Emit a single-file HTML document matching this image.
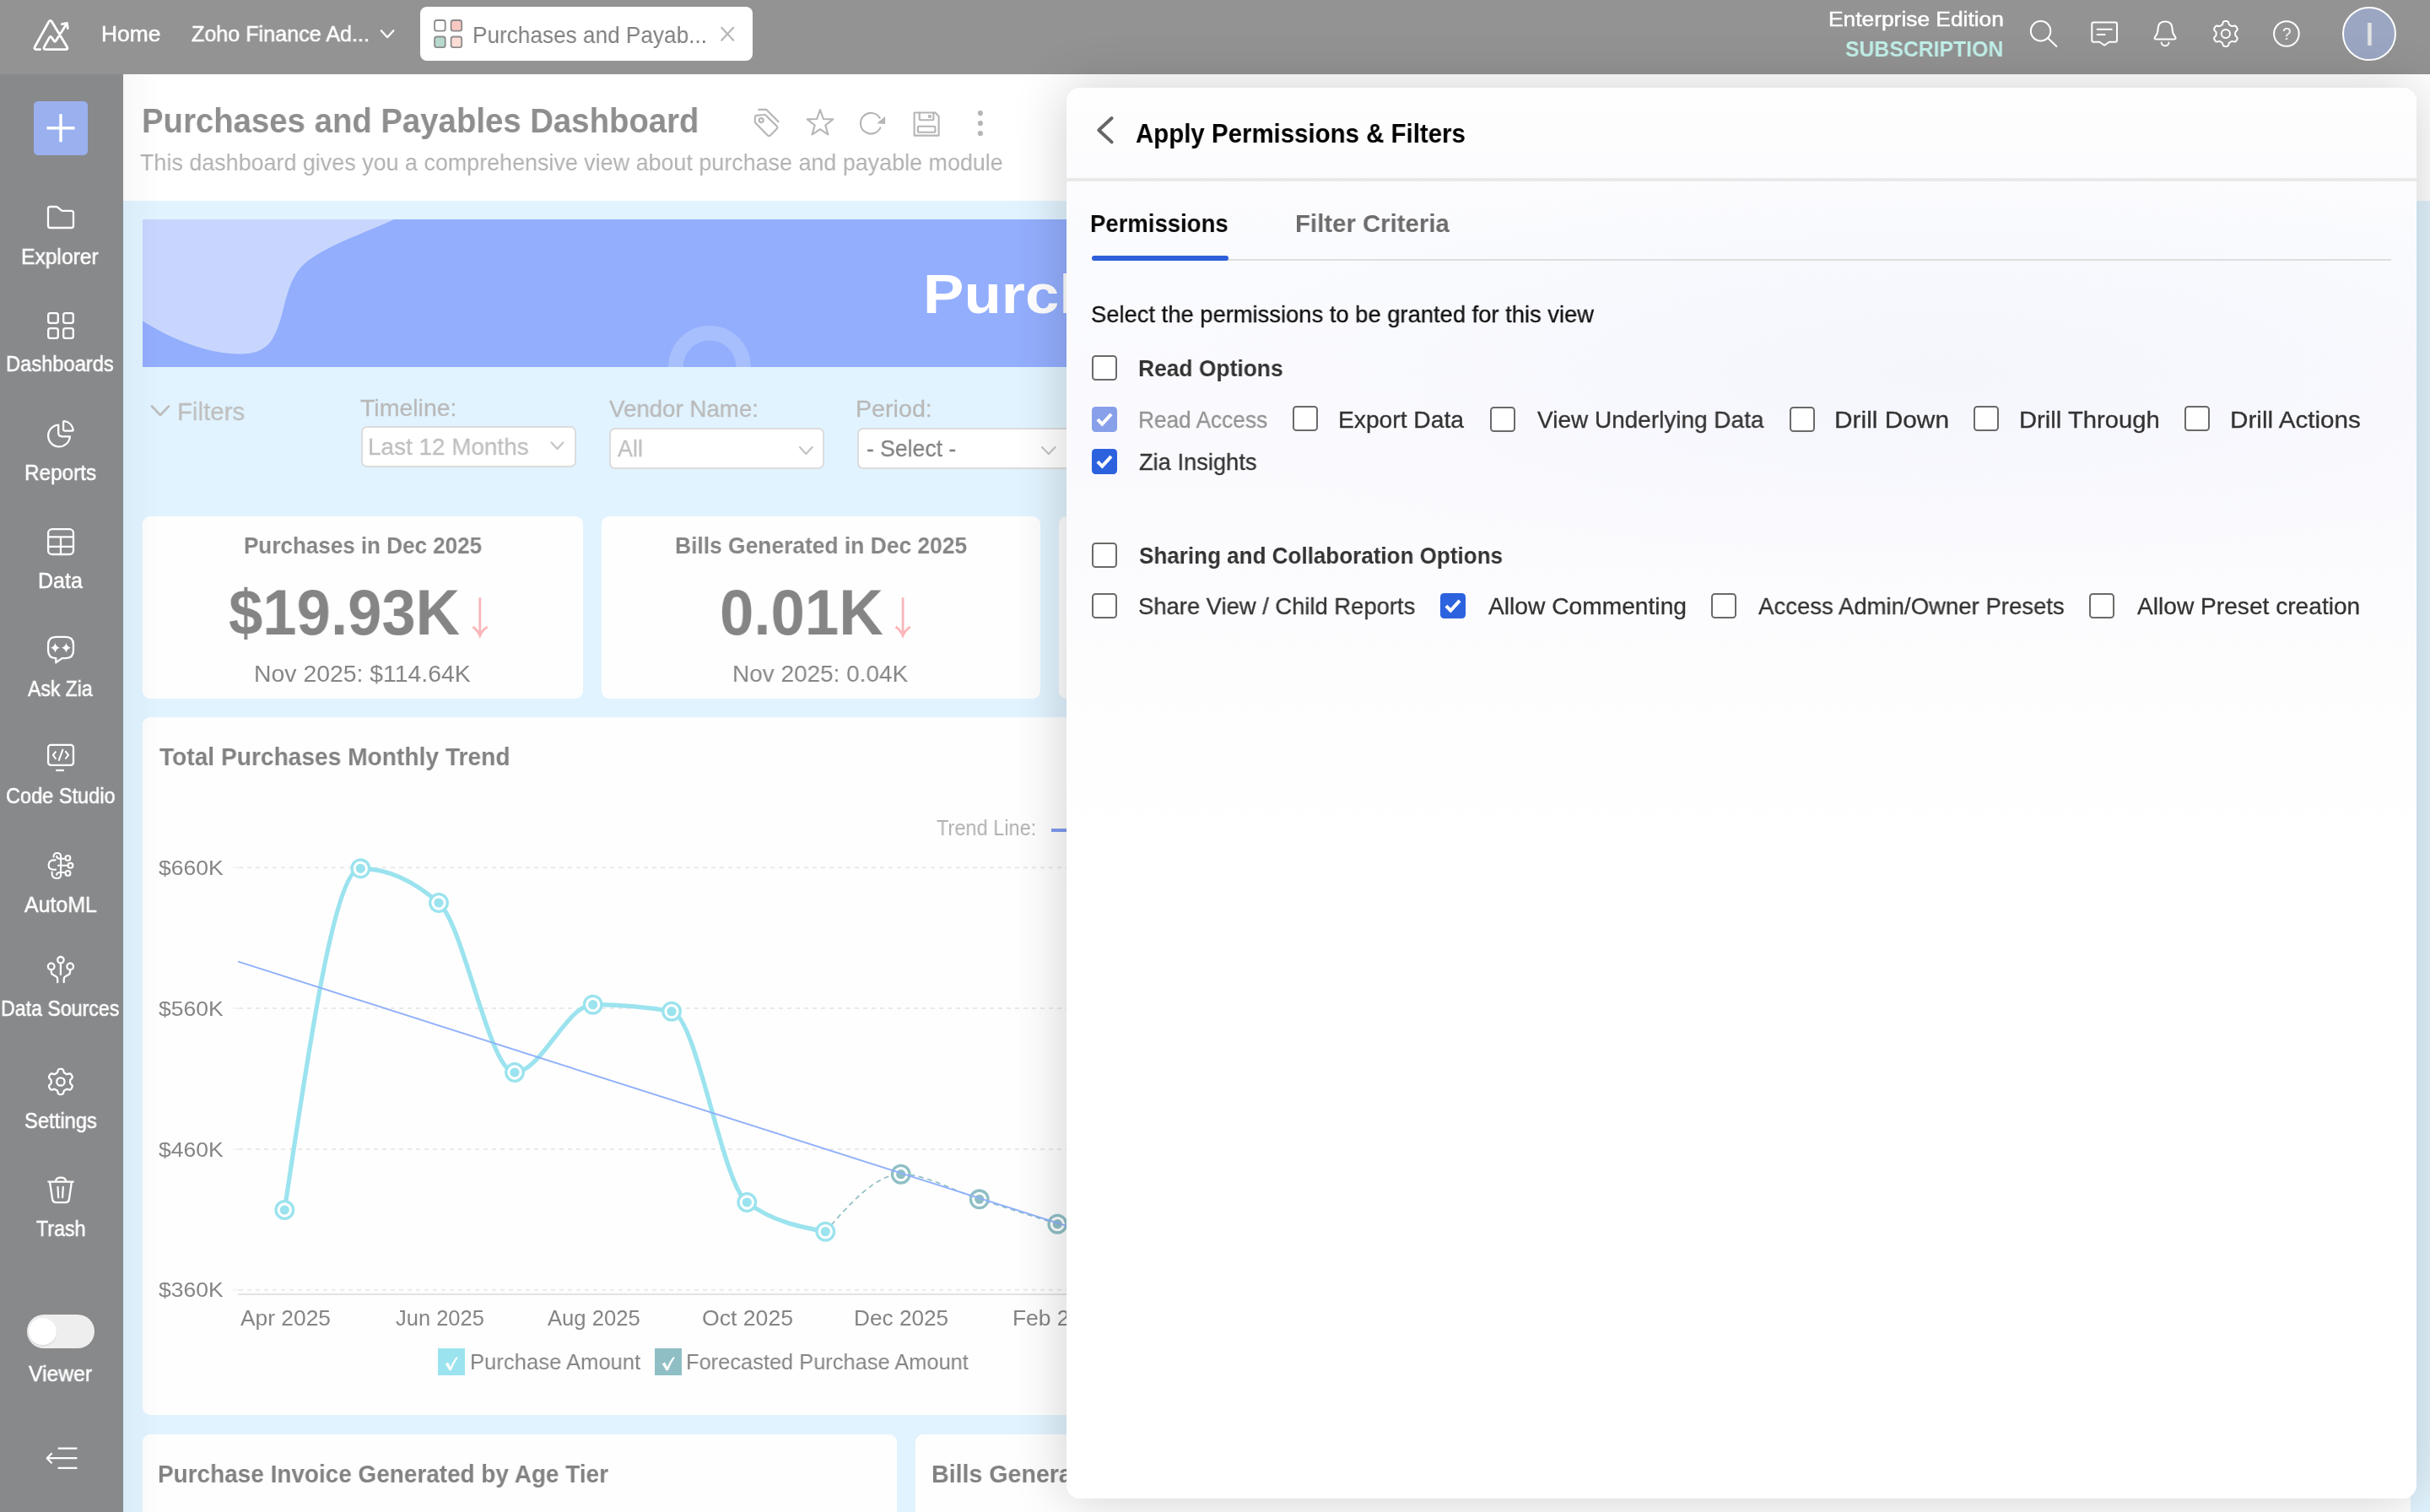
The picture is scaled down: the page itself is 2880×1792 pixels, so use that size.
<!DOCTYPE html>
<html lang="en"><head><meta charset="utf-8"><title>Purchases and Payables Dashboard</title>
<style>
html,body{margin:0;padding:0}
body{width:2880px;height:1792px;overflow:hidden;position:relative;background:#e1f3fe;
 font-family:"Liberation Sans",sans-serif;}
.r{position:absolute;box-sizing:border-box;display:block}
.t{position:absolute;white-space:nowrap;line-height:1;transform-origin:0 0;display:block;will-change:transform}
.cb{position:absolute;box-sizing:border-box;width:30px;height:30px;border:2px solid #6a6a6a;border-radius:4.5px;background:#fff}
.cb.on{border:none;background:#2c62de}
.cb.dis{border:none;background:#88a0ea}
</style></head><body>

<div class="r" style="left:146px;top:88px;width:2734px;height:150px;background:#ffffff;border-radius:0px;"></div>
<span class="t" style="left:167.65px;top:122.95px;font-size:41.4px;font-weight:700;color:#8e8e8e;transform:scaleX(0.9261);">Purchases and Payables Dashboard</span>
<span class="t" style="left:166.10px;top:179.00px;font-size:28px;font-weight:400;color:#b1b1b1;transform:scaleX(0.9606);">This dashboard gives you a comprehensive view about purchase and payable module</span>
<svg class="r" style="left:880px;top:120px;" width="300" height="50" viewBox="880 120 300 50" fill="none" stroke-linecap="round" stroke-linejoin="round">
<g stroke="#b5b5b5" stroke-width="2.1">
<path d="M896.5 136.9 L905.3 136 Q906.8 135.8 907.9 136.9 L920.6 149.6 Q922.2 151.2 920.6 152.8 L913 160.4 Q911.5 161.9 909.9 160.4 L895.6 146.1 Q894.6 145.1 894.7 143.7 L895 138.4 Q895.1 137 896.5 136.9 Z"/>
<circle cx="902.2" cy="142.6" r="2.5"/>
<path d="M899.3 129.9 H907 Q908.4 129.9 909.4 130.9 L922.6 144.3"/>
<path d="M972.0 130.2 L975.9 141.0 L987.3 141.4 L978.3 148.5 L981.4 159.5 L972.0 153.2 L962.6 159.5 L965.7 148.5 L956.7 141.4 L968.1 141.0 Z"/>
<path d="M1042.6 139.6 A12.3 12.3 0 1 0 1043.4 151.4"/>
<path d="M1083.6 133.5 H1108.4 L1112.6 137.7 V160.6 H1083.6 Z"/>
<path d="M1089.7 133.5 V140.8 Q1089.7 142.3 1091.2 142.3 H1104.9 Q1106.4 142.3 1106.4 140.8 V133.5"/>
<rect x="1087.8" y="149.7" width="20.6" height="7" rx="1.5"/>
</g>
<path d="M1039.3 146.3 L1049.1 138 V147 Z" fill="#b5b5b5"/>
<rect x="1100.1" y="136.1" width="3.7" height="3.7" fill="#b5b5b5"/>
<circle cx="1161.9" cy="134.1" r="3.1" fill="#b5b5b5"/><circle cx="1161.9" cy="146" r="3.1" fill="#b5b5b5"/><circle cx="1161.9" cy="158" r="3.1" fill="#b5b5b5"/>
</svg>
<svg class="r" style="left:169px;top:259.7px;overflow:hidden" width="1120" height="175" viewBox="169 259.7 1120 175" fill="none" stroke-linecap="round" stroke-linejoin="round">
<rect x="169" y="259.7" width="1120" height="175" fill="#93aefd"/>
<path d="M169 259.7 H467 C440 273 395 287 366 308 C335 330 340 375 322 403 C310 420 292 420 270 418.5 C235 415 195 397 169 380 Z" fill="#c8d6fd"/>
<circle cx="841" cy="434.5" r="40" stroke="#a8bffd" stroke-width="17.5"/>
</svg>
<span class="t" style="left:1093.75px;top:315.98px;font-size:65px;font-weight:700;color:#ffffff;transform:scaleX(1.1165);">Purchases</span>
<svg class="r" style="left:170px;top:470px;" width="40" height="34" viewBox="170 470 40 34" fill="none" stroke-linecap="round" stroke-linejoin="round"><path d="M180 481.5 L190 492 L200 481.5" stroke="#bdbdbd" stroke-width="2.6"/></svg>
<span class="t" style="left:209.67px;top:472.91px;font-size:30px;font-weight:400;color:#bebebe;transform:scaleX(0.9802);-webkit-text-stroke:0.3px #bebebe">Filters</span>
<span class="t" style="left:427.06px;top:469.60px;font-size:28px;font-weight:400;color:#b9b9b9;transform:scaleX(1.0176);-webkit-text-stroke:0.3px #b9b9b9">Timeline:</span>
<span class="t" style="left:721.58px;top:471.30px;font-size:28px;font-weight:400;color:#b9b9b9;transform:scaleX(0.9882);-webkit-text-stroke:0.3px #b9b9b9">Vendor Name:</span>
<span class="t" style="left:1014.40px;top:470.80px;font-size:28px;font-weight:400;color:#b9b9b9;transform:scaleX(1.0238);-webkit-text-stroke:0.3px #b9b9b9">Period:</span>
<div class="r" style="left:427.5px;top:504.5px;width:255px;height:49px;background:#fff;border-radius:7px;border:2px solid #dcdcdc;"></div>
<div class="r" style="left:721.5px;top:506.5px;width:255px;height:49px;background:#fff;border-radius:7px;border:2px solid #dcdcdc;"></div>
<div class="r" style="left:1016px;top:506.5px;width:300px;height:49px;background:#fff;border-radius:7px;border:2px solid #dcdcdc;"></div>
<span class="t" style="left:436.06px;top:515.60px;font-size:28px;font-weight:400;color:#bfbfbf;transform:scaleX(0.9955);-webkit-text-stroke:0.3px #bfbfbf">Last 12 Months</span>
<span class="t" style="left:731.70px;top:517.80px;font-size:28px;font-weight:400;color:#bfbfbf;transform:scaleX(0.9573);-webkit-text-stroke:0.3px #bfbfbf">All</span>
<span class="t" style="left:1026.63px;top:517.80px;font-size:28px;font-weight:400;color:#838383;transform:scaleX(0.9476);-webkit-text-stroke:0.3px #838383">- Select -</span>
<svg class="r" style="left:640px;top:515px;" width="640" height="35" viewBox="640 515 640 35" fill="none" stroke-linecap="round" stroke-linejoin="round"><g stroke="#c4c4c4" stroke-width="2.2">
<path d="M653.5 524.5 L660.5 532 L667.5 524.5"/><path d="M948 530 L955.3 538 L962.6 530"/><path d="M1235 530 L1242.8 538 L1250.6 530"/></g></svg>
<div class="r" style="left:169px;top:612px;width:521.7px;height:215.7px;background:#fefefe;border-radius:9px;"></div>
<div class="r" style="left:713.3px;top:612px;width:519.4px;height:215.7px;background:#fefefe;border-radius:9px;"></div>
<div class="r" style="left:1255px;top:612px;width:400px;height:215.7px;background:#fefefe;border-radius:9px;"></div>
<span class="t" style="left:288.68px;top:632.04px;font-size:28.3px;font-weight:700;color:#868686;transform:scaleX(0.9196);">Purchases in Dec 2025</span>
<span class="t" style="left:271.25px;top:688.34px;font-size:76.5px;font-weight:700;color:#858585;transform:scaleX(0.9471);">$19.93K</span>
<span class="t" style="left:301.35px;top:784.16px;font-size:28.4px;font-weight:400;color:#868686;transform:scaleX(0.9983);">Nov 2025: $114.64K</span>
<span class="t" style="left:799.75px;top:632.04px;font-size:28.3px;font-weight:700;color:#868686;transform:scaleX(0.9323);">Bills Generated in Dec 2025</span>
<span class="t" style="left:853.35px;top:688.34px;font-size:76.5px;font-weight:700;color:#858585;transform:scaleX(0.9486);">0.01K</span>
<span class="t" style="left:868.39px;top:784.16px;font-size:28.4px;font-weight:400;color:#868686;transform:scaleX(0.9843);">Nov 2025: 0.04K</span>
<svg class="r" style="left:550px;top:700px;" width="540" height="64" viewBox="550 700 540 64" fill="none" stroke-linecap="round" stroke-linejoin="round"><g stroke="#fbb6ba" stroke-width="2.8" stroke-linecap="butt" stroke-linejoin="miter">
<path d="M568.8 708.2 V752 M560.4 743 Q566 746.5 568.8 753.4 Q571.6 746.5 577.6 743"/>
<path d="M1070.1 708.2 V752 M1061.5 743 Q1067.3 746.5 1070.1 753.4 Q1072.9 746.5 1078.9 743"/></g></svg>
<div class="r" style="left:169px;top:850px;width:2688px;height:827.3px;background:#fefefe;border-radius:9px;"></div>
<span class="t" style="left:189.06px;top:882.75px;font-size:29px;font-weight:700;color:#828282;transform:scaleX(0.9704);">Total Purchases Monthly Trend</span>
<span class="t" style="left:1109.53px;top:968.84px;font-size:25px;font-weight:400;color:#b2b2b2;transform:scaleX(0.9416);">Trend Line:</span>
<div class="r" style="left:1246px;top:981.7px;width:60px;height:4.3px;background:#7f9cf0;border-radius:0px;"></div>
<span class="t" style="left:188.02px;top:1016.98px;font-size:24px;font-weight:400;color:#858585;transform:scaleX(1.1034);">$660K</span>
<span class="t" style="left:188.02px;top:1183.78px;font-size:24px;font-weight:400;color:#858585;transform:scaleX(1.1034);">$560K</span>
<span class="t" style="left:188.02px;top:1350.68px;font-size:24px;font-weight:400;color:#858585;transform:scaleX(1.1034);">$460K</span>
<span class="t" style="left:188.02px;top:1517.48px;font-size:24px;font-weight:400;color:#858585;transform:scaleX(1.1034);">$360K</span>
<span class="t" style="left:285.00px;top:1550.14px;font-size:25px;font-weight:400;color:#858585;transform:scaleX(1.0547);">Apr 2025</span>
<span class="t" style="left:468.92px;top:1550.14px;font-size:25px;font-weight:400;color:#858585;transform:scaleX(1.0187);">Jun 2025</span>
<span class="t" style="left:649.00px;top:1550.14px;font-size:25px;font-weight:400;color:#858585;transform:scaleX(1.0255);">Aug 2025</span>
<span class="t" style="left:832.10px;top:1550.14px;font-size:25px;font-weight:400;color:#858585;transform:scaleX(1.0650);">Oct 2025</span>
<span class="t" style="left:1012.20px;top:1550.14px;font-size:25px;font-weight:400;color:#858585;transform:scaleX(1.0481);">Dec 2025</span>
<span class="t" style="left:1199.59px;top:1550.14px;font-size:25px;font-weight:400;color:#858585;transform:scaleX(1.0553);">Feb 2026</span>
<svg class="r" style="left:170px;top:1000px;" width="1330" height="560" viewBox="170 1000 1330 560" fill="none" stroke-linecap="round" stroke-linejoin="round"><path d="M283 1028.3 H1500" stroke="#eaeaea" stroke-width="2" stroke-dasharray="5 5" stroke-linecap="butt"/><path d="M275.5 1028.3 H283" stroke="#f4f4f4" stroke-width="2" stroke-linecap="butt"/><path d="M283 1195.1 H1500" stroke="#eaeaea" stroke-width="2" stroke-dasharray="5 5" stroke-linecap="butt"/><path d="M275.5 1195.1 H283" stroke="#f4f4f4" stroke-width="2" stroke-linecap="butt"/><path d="M283 1362.0 H1500" stroke="#eaeaea" stroke-width="2" stroke-dasharray="5 5" stroke-linecap="butt"/><path d="M275.5 1362.0 H283" stroke="#f4f4f4" stroke-width="2" stroke-linecap="butt"/><path d="M283 1528.8 H1500" stroke="#eaeaea" stroke-width="2" stroke-dasharray="5 5" stroke-linecap="butt"/><path d="M275.5 1528.8 H283" stroke="#f4f4f4" stroke-width="2" stroke-linecap="butt"/><path d="M283 1534 H1500" stroke="#e2e2e2" stroke-width="2"/><path d="M978.3 1459.7 C1008.1 1425.7 1037.9 1391.7 1067.7 1391.7 C1098.7 1391.7 1129.7 1411.4 1160.7 1421.3 C1191.6 1431.1 1222.4 1440.9 1253.3 1450.7 C1283.9 1460.4 1314.4 1470.2 1345.0 1480.0" stroke="#8fbfc5" stroke-width="1.7" stroke-dasharray="6 4.5" stroke-linecap="butt"/><path d="M337.3 1434.0 C367.3 1231.7 397.3 1029.3 427.3 1029.3 C458.2 1029.3 489.1 1042.9 520.0 1070.0 C550.0 1096.3 580.0 1271.0 610.0 1271.0 C640.9 1271.0 671.8 1190.7 702.7 1190.7 C733.8 1190.7 764.9 1193.4 796.0 1198.7 C825.8 1203.8 855.5 1402.8 885.3 1425.0 C916.3 1448.1 947.3 1453.9 978.3 1459.7" stroke="#9be3ee" stroke-width="5.2"/><circle cx="337.3" cy="1434" r="10.3" fill="#fff" stroke="#9be3ee" stroke-width="3.3"/><circle cx="337.3" cy="1434" r="5.6" fill="#9be3ee"/><circle cx="427.3" cy="1029.3" r="10.3" fill="#fff" stroke="#9be3ee" stroke-width="3.3"/><circle cx="427.3" cy="1029.3" r="5.6" fill="#9be3ee"/><circle cx="520" cy="1070" r="10.3" fill="#fff" stroke="#9be3ee" stroke-width="3.3"/><circle cx="520" cy="1070" r="5.6" fill="#9be3ee"/><circle cx="610" cy="1271" r="10.3" fill="#fff" stroke="#9be3ee" stroke-width="3.3"/><circle cx="610" cy="1271" r="5.6" fill="#9be3ee"/><circle cx="702.7" cy="1190.7" r="10.3" fill="#fff" stroke="#9be3ee" stroke-width="3.3"/><circle cx="702.7" cy="1190.7" r="5.6" fill="#9be3ee"/><circle cx="796" cy="1198.7" r="10.3" fill="#fff" stroke="#9be3ee" stroke-width="3.3"/><circle cx="796" cy="1198.7" r="5.6" fill="#9be3ee"/><circle cx="885.3" cy="1425" r="10.3" fill="#fff" stroke="#9be3ee" stroke-width="3.3"/><circle cx="885.3" cy="1425" r="5.6" fill="#9be3ee"/><circle cx="978.3" cy="1459.7" r="10.3" fill="#fff" stroke="#9be3ee" stroke-width="3.3"/><circle cx="978.3" cy="1459.7" r="5.6" fill="#9be3ee"/><circle cx="1067.7" cy="1391.7" r="10.3" fill="#fff" stroke="#8fbfc5" stroke-width="3.3"/><circle cx="1067.7" cy="1391.7" r="5.6" fill="#8fbfc5"/><circle cx="1160.7" cy="1421.3" r="10.3" fill="#fff" stroke="#8fbfc5" stroke-width="3.3"/><circle cx="1160.7" cy="1421.3" r="5.6" fill="#8fbfc5"/><circle cx="1253.3" cy="1450.7" r="10.3" fill="#fff" stroke="#8fbfc5" stroke-width="3.3"/><circle cx="1253.3" cy="1450.7" r="5.6" fill="#8fbfc5"/><circle cx="1345" cy="1480" r="10.3" fill="#fff" stroke="#8fbfc5" stroke-width="3.3"/><circle cx="1345" cy="1480" r="5.6" fill="#8fbfc5"/><path d="M282.9 1139.8 L1400 1496.3" stroke="#8fb0fb" stroke-width="1.9"/></svg>
<div class="r" style="left:519px;top:1598px;width:31.7px;height:31.7px;background:#9be3ee;border-radius:0px;"></div>
<div class="r" style="left:776px;top:1598px;width:31.7px;height:31.7px;background:#8fbfc5;border-radius:0px;"></div>
<svg class="r" style="left:519px;top:1598px;" width="290" height="32" viewBox="519 1598 290 32" fill="none" stroke-linecap="round" stroke-linejoin="round"><path transform="translate(0 0)" d="M527.6 1616.8 L530.9 1614.5 Q532.9 1617.4 533.9 1620.2 Q537 1612.4 541.3 1607.9 L542.8 1608.7 Q538.2 1615 534.8 1624.3 L532.5 1624.3 Q530.8 1620.2 527.6 1616.8 Z" fill="#fff"/><path transform="translate(257 0)" d="M527.6 1616.8 L530.9 1614.5 Q532.9 1617.4 533.9 1620.2 Q537 1612.4 541.3 1607.9 L542.8 1608.7 Q538.2 1615 534.8 1624.3 L532.5 1624.3 Q530.8 1620.2 527.6 1616.8 Z" fill="#fff"/></svg>
<span class="t" style="left:556.91px;top:1600.99px;font-size:26px;font-weight:400;color:#858585;transform:scaleX(0.9852);">Purchase Amount</span>
<span class="t" style="left:812.92px;top:1600.99px;font-size:26px;font-weight:400;color:#858585;transform:scaleX(0.9775);">Forecasted Purchase Amount</span>
<div class="r" style="left:169px;top:1700.3px;width:893.7px;height:120px;background:#fefefe;border-radius:9px;"></div>
<div class="r" style="left:1085px;top:1700.3px;width:1772px;height:120px;background:#fefefe;border-radius:9px;"></div>
<span class="t" style="left:187.49px;top:1732.75px;font-size:29px;font-weight:700;color:#828282;transform:scaleX(0.9630);">Purchase Invoice Generated by Age Tier</span>
<span class="t" style="left:1104.15px;top:1732.75px;font-size:29px;font-weight:700;color:#828282;transform:scaleX(0.9856);">Bills Generated</span>
<div class="r" style="left:0px;top:0px;width:2880px;height:88px;background:#939393;border-radius:0px;"></div>
<svg class="r" style="left:36px;top:18px;" width="50" height="46" viewBox="36 18 50 46" fill="none" stroke-linecap="round" stroke-linejoin="round"><g stroke="#ffffff" stroke-width="2.8">
<path d="M47.6 58.6 H43.8 Q39.6 58.6 41.6 54.9 L57.7 26 Q59.7 22.9 61.6 26 L79.3 55.2 Q81.2 58.6 77.4 58.6 H55 Q50.6 58.6 52.7 54.9 L58.6 44.4 Q59.8 42.5 61.1 44.3 L64.2 48.6 Q65.2 49.9 66.1 48.5 L79 28.3"/>
<path d="M73.3 28.6 L79.4 27.5 L80.3 33.6"/></g></svg>
<span class="t" style="left:119.94px;top:28.33px;font-size:25.6px;font-weight:400;color:#ffffff;transform:scaleX(1.0314);-webkit-text-stroke:0.5px #fff">Home</span>
<span class="t" style="left:226.96px;top:28.33px;font-size:25.6px;font-weight:400;color:#ffffff;transform:scaleX(0.9820);-webkit-text-stroke:0.5px #fff">Zoho Finance Ad...</span>
<svg class="r" style="left:446px;top:30px;" width="26" height="22" viewBox="446 30 26 22" fill="none" stroke-linecap="round" stroke-linejoin="round"><path d="M451.8 36.2 L459.1 44.2 L466.4 36.2" stroke="#ffffff" stroke-width="2.2"/></svg>
<div class="r" style="left:497.7px;top:8px;width:394.7px;height:64px;background:#ffffff;border-radius:8px;"></div>
<svg class="r" style="left:512px;top:20px;" width="40" height="40" viewBox="512 20 40 40" fill="none" stroke-linecap="round" stroke-linejoin="round"><g stroke="#8b8b8b" stroke-width="1.8">
<rect x="515.1" y="24" width="12.6" height="12.6" rx="2.6" fill="#fff"/>
<rect x="534.6" y="24" width="12.6" height="12.6" rx="2.6" fill="#f9c8c3"/>
<rect x="515.1" y="43.5" width="12.6" height="12.6" rx="2.6" fill="#b6dacd"/>
<rect x="534.6" y="43.5" width="12.6" height="12.6" rx="2.6" fill="#fbddd5"/></g></svg>
<span class="t" style="left:560.00px;top:27.80px;font-size:28px;font-weight:400;color:#808080;transform:scaleX(0.9350);">Purchases and Payab...</span>
<svg class="r" style="left:850px;top:28px;" width="26" height="26" viewBox="850 28 26 26" fill="none" stroke-linecap="round" stroke-linejoin="round"><path d="M855.2 32.8 L869.2 47.8 M869.2 32.8 L855.2 47.8" stroke="#b6b6b6" stroke-width="2.2"/></svg>
<span class="t" style="left:2166.86px;top:10.88px;font-size:24.6px;font-weight:400;color:#ffffff;transform:scaleX(1.0710);-webkit-text-stroke:0.5px #fff">Enterprise Edition</span>
<span class="t" style="left:2186.99px;top:45.29px;font-size:26px;font-weight:700;color:#c1f0e9;transform:scaleX(0.9530);">SUBSCRIPTION</span>
<svg class="r" style="left:2400px;top:18px;" width="340" height="46" viewBox="2400 18 340 46" fill="none" stroke-linecap="round" stroke-linejoin="round"><g stroke="#ffffff" stroke-width="2">
<circle cx="2418.6" cy="36.8" r="11.7"/><path d="M2427.3 45.3 L2437.4 55"/>
<path d="M2481.3 26.6 H2507 Q2509 26.6 2509 28.6 V47.7 Q2509 49.7 2507 49.7 H2499.8 L2494.1 53.8 L2488.4 49.7 H2481.3 Q2479.3 49.7 2479.3 47.7 V28.6 Q2479.3 26.6 2481.3 26.6 Z"/>
<path d="M2485.6 34.7 H2502.8 M2485.6 41 H2494.6"/>
<path d="M2556.4 46.6 Q2552.2 46.6 2554.2 43.6 Q2557.6 39.6 2557.6 34.5 Q2557.6 25.4 2566.1 25.4 Q2574.6 25.4 2574.6 34.5 Q2574.6 39.6 2578 43.6 Q2580 46.6 2575.8 46.6 Z"/>
<path d="M2561.7 50.6 A4.5 4.6 0 0 0 2570.5 50.6"/>
<circle cx="2637.9" cy="40" r="5.1"/>
<circle cx="2709.9" cy="40" r="14.8"/>
</g><path d="M2649.20 40.00 L2649.20 39.41 L2649.20 38.81 L2649.28 38.20 L2649.67 37.50 L2650.60 36.60 L2651.47 35.59 L2651.70 34.70 L2651.55 33.92 L2651.26 33.20 L2650.89 32.50 L2650.47 31.84 L2649.99 31.22 L2649.39 30.70 L2648.51 30.45 L2647.20 30.70 L2645.95 31.06 L2645.15 31.05 L2644.58 30.81 L2644.06 30.51 L2643.55 30.21 L2643.04 29.92 L2642.52 29.62 L2642.03 29.25 L2641.62 28.56 L2641.30 27.30 L2640.87 26.04 L2640.21 25.40 L2639.46 25.14 L2638.68 25.03 L2637.90 25.00 L2637.12 25.03 L2636.34 25.14 L2635.59 25.40 L2634.93 26.04 L2634.50 27.30 L2634.18 28.56 L2633.77 29.25 L2633.28 29.62 L2632.76 29.92 L2632.25 30.21 L2631.74 30.51 L2631.22 30.81 L2630.65 31.05 L2629.85 31.06 L2628.60 30.70 L2627.29 30.45 L2626.41 30.70 L2625.81 31.22 L2625.33 31.84 L2624.91 32.50 L2624.54 33.20 L2624.25 33.92 L2624.10 34.70 L2624.33 35.59 L2625.20 36.60 L2626.13 37.50 L2626.52 38.20 L2626.60 38.81 L2626.60 39.41 L2626.60 40.00 L2626.60 40.59 L2626.60 41.19 L2626.52 41.80 L2626.13 42.50 L2625.20 43.40 L2624.33 44.41 L2624.10 45.30 L2624.25 46.08 L2624.54 46.80 L2624.91 47.50 L2625.33 48.16 L2625.81 48.78 L2626.41 49.30 L2627.29 49.55 L2628.60 49.30 L2629.85 48.94 L2630.65 48.95 L2631.22 49.19 L2631.74 49.49 L2632.25 49.79 L2632.76 50.08 L2633.28 50.38 L2633.77 50.75 L2634.18 51.44 L2634.50 52.70 L2634.93 53.96 L2635.59 54.60 L2636.34 54.86 L2637.12 54.97 L2637.90 55.00 L2638.68 54.97 L2639.46 54.86 L2640.21 54.60 L2640.87 53.96 L2641.30 52.70 L2641.62 51.44 L2642.03 50.75 L2642.52 50.38 L2643.04 50.08 L2643.55 49.79 L2644.06 49.49 L2644.58 49.19 L2645.15 48.95 L2645.95 48.94 L2647.20 49.30 L2648.51 49.55 L2649.39 49.30 L2649.99 48.78 L2650.47 48.16 L2650.89 47.50 L2651.26 46.80 L2651.55 46.08 L2651.70 45.30 L2651.47 44.41 L2650.60 43.40 L2649.67 42.50 L2649.28 41.80 L2649.20 41.19 L2649.20 40.59 Z" stroke="#ffffff" stroke-width="2"/></svg>
<span class="t" style="left:2704.51px;top:30.25px;font-size:20.5px;font-weight:400;color:#ffffff;transform:scaleX(0.9200);">?</span>
<div class="r" style="left:2776px;top:8px;width:64px;height:64px;background:#9ba6c3;border-radius:32px;border:2.4px solid #fff"></div>
<span class="t" style="left:2803.96px;top:22.24px;font-size:38.7px;font-weight:700;color:#e4e4e4;transform:scaleX(0.8174);">I</span>
<div class="r" style="left:146px;top:88px;width:46px;height:1704px;background:linear-gradient(90deg,rgba(0,0,0,.028) 0%,rgba(0,0,0,.014) 40%,rgba(0,0,0,0) 100%)"></div>
<div class="r" style="left:0px;top:88px;width:146px;height:1704px;background:#88898b;border-radius:0px;"></div>
<div class="r" style="left:40px;top:120px;width:64px;height:64px;background:#9ab0ef;border-radius:5px;"></div>
<svg class="r" style="left:50px;top:130px;" width="44" height="44" viewBox="50 130 44 44" fill="none" stroke-linecap="round" stroke-linejoin="round"><path d="M55.5 151.8 H88.5 M72 135.3 V168.3" stroke="#ffffff" stroke-width="3.4" stroke-linecap="butt"/></svg>
<svg class="r" style="left:0px;top:230px;" width="146" height="1530" viewBox="0 230 146 1530" fill="none" stroke-linecap="round" stroke-linejoin="round"><g stroke="#ffffff" stroke-width="2.3"><path d="M59.6 245 H66.3 Q67.6 245 68.6 245.8 L72.2 248.9 Q73.2 249.8 74.6 249.8 H84.4 Q87 249.8 87 252.4 V267.4 Q87 270 84.4 270 H59.6 Q57 270 57 267.4 V247.6 Q57 245 59.6 245 Z"/><rect x="57.2" y="371.2" width="11.6" height="11.6" rx="2.4"/><rect x="75.2" y="371.2" width="11.6" height="11.6" rx="2.4"/><rect x="57.2" y="389.2" width="11.6" height="11.6" rx="2.4"/><rect x="75.2" y="389.2" width="11.6" height="11.6" rx="2.4"/><path d="M69.2 503.6 A12.9 12.9 0 1 0 82.9 517.3 H73.4 Q69.2 517.3 69.2 513.1 Z"/><path d="M75.1 500.2 Q75.1 498.9 76.4 499.1 A12.4 12.4 0 0 1 86.7 509.3 Q86.9 510.6 85.6 510.6 H76.4 Q75.1 510.6 75.1 509.3 Z"/><rect x="57.1" y="627.1" width="29.9" height="29.9" rx="4.6"/><path d="M57.1 636.3 H87 M57.1 647.9 H87 M72 636.3 V657"/><path d="M66.4 754.9 H77.8 Q87 754.9 87 764 V771 Q87 780.1 77.8 780.1 H73.6 L66.3 785.3 V780.1 Q57.1 780.1 57.1 771 V764 Q57.1 754.9 66.4 754.9 Z"/><rect x="57.1" y="882.9" width="29.9" height="24" rx="3.2"/><path d="M66.3 913 H75.9" stroke-linecap="butt"/><path d="M65.9 891.2 L62.9 894.9 L65.9 899" stroke-width="2.1"/><path d="M77.9 890.9 L81.1 894.9 L77.9 898.8" stroke-width="2.1"/><path d="M74.3 888.6 L69.8 901" stroke-width="2.1"/><g stroke-width="2.1"><path d="M72.1 1014.5 V1037.8"/>
<path d="M72.1 1015.4 Q72.1 1011 67.8 1011 Q63.4 1011 63.5 1015.6"/>
<path d="M67 1014.8 Q67.6 1017.7 70.5 1017.7 H77.2"/>
<path d="M65.6 1019.4 Q57.6 1018.8 57.6 1025.4 Q57.6 1031.3 66 1030.6"/>
<path d="M69 1025.8 H80.2"/>
<path d="M61.6 1033.5 Q60.8 1041 67.3 1041 Q72.1 1041 72.1 1037"/>
<path d="M67 1036.8 Q67.6 1034 70.5 1034 H77.2"/>
<circle cx="80.4" cy="1016.9" r="2.9"/><circle cx="83.5" cy="1025.8" r="2.9"/><circle cx="80.5" cy="1034.9" r="2.9"/></g><circle cx="71.9" cy="1137.7" r="3.7"/><path d="M71.9 1141.6 V1155"/>
<circle cx="60.7" cy="1145.4" r="3.8"/><path d="M60.8 1149.3 V1152 Q60.8 1154.3 62.8 1155.3 L66.4 1157.2 Q68.2 1158.2 68.2 1160.3 V1164.2"/>
<circle cx="83.2" cy="1145.4" r="3.8"/><path d="M83.1 1149.3 V1152 Q83.1 1154.3 81.1 1155.3 L77.5 1157.2 Q75.7 1158.2 75.7 1160.3 V1164.2"/><path d="M83.10 1282.00 L83.10 1281.41 L83.10 1280.82 L83.19 1280.21 L83.61 1279.51 L84.60 1278.60 L85.53 1277.57 L85.78 1276.67 L85.64 1275.88 L85.34 1275.15 L84.98 1274.45 L84.55 1273.78 L84.07 1273.16 L83.46 1272.64 L82.55 1272.41 L81.20 1272.70 L79.91 1273.11 L79.09 1273.12 L78.52 1272.89 L78.01 1272.60 L77.50 1272.30 L76.99 1272.01 L76.48 1271.71 L76.00 1271.33 L75.60 1270.62 L75.30 1269.30 L74.88 1267.98 L74.23 1267.31 L73.47 1267.04 L72.69 1266.93 L71.90 1266.90 L71.11 1266.93 L70.33 1267.04 L69.57 1267.31 L68.92 1267.98 L68.50 1269.30 L68.20 1270.62 L67.80 1271.33 L67.32 1271.71 L66.81 1272.01 L66.30 1272.30 L65.79 1272.60 L65.28 1272.89 L64.71 1273.12 L63.89 1273.11 L62.60 1272.70 L61.25 1272.41 L60.34 1272.64 L59.73 1273.16 L59.25 1273.78 L58.82 1274.45 L58.46 1275.15 L58.16 1275.88 L58.02 1276.67 L58.27 1277.57 L59.20 1278.60 L60.19 1279.51 L60.61 1280.21 L60.70 1280.82 L60.70 1281.41 L60.70 1282.00 L60.70 1282.59 L60.70 1283.18 L60.61 1283.79 L60.19 1284.49 L59.20 1285.40 L58.27 1286.43 L58.02 1287.33 L58.16 1288.12 L58.46 1288.85 L58.82 1289.55 L59.25 1290.22 L59.73 1290.84 L60.34 1291.36 L61.25 1291.59 L62.60 1291.30 L63.89 1290.89 L64.71 1290.88 L65.28 1291.11 L65.79 1291.40 L66.30 1291.70 L66.81 1291.99 L67.32 1292.29 L67.80 1292.67 L68.20 1293.38 L68.50 1294.70 L68.92 1296.02 L69.57 1296.69 L70.33 1296.96 L71.11 1297.07 L71.90 1297.10 L72.69 1297.07 L73.47 1296.96 L74.23 1296.69 L74.88 1296.02 L75.30 1294.70 L75.60 1293.38 L76.00 1292.67 L76.48 1292.29 L76.99 1291.99 L77.50 1291.70 L78.01 1291.40 L78.52 1291.11 L79.09 1290.88 L79.91 1290.89 L81.20 1291.30 L82.55 1291.59 L83.46 1291.36 L84.07 1290.84 L84.55 1290.22 L84.98 1289.55 L85.34 1288.85 L85.64 1288.12 L85.78 1287.33 L85.53 1286.43 L84.60 1285.40 L83.61 1284.49 L83.19 1283.79 L83.10 1283.18 L83.10 1282.59 Z"/><circle cx="71.9" cy="1282" r="4.7"/><path d="M57.3 1400.6 H86.8"/><path d="M66 1400 Q66.6 1395.7 72.1 1395.7 Q77.6 1395.7 78.1 1400"/>
<path d="M59.2 1401.6 L62.2 1421.8 Q62.8 1425.2 66.2 1425.2 H77.8 Q81.2 1425.2 81.8 1421.8 L84.8 1401.6"/>
<path d="M68.5 1406.8 L69.2 1419.2 M74.8 1406.8 L74.1 1419.2" stroke-width="2.2"/><path d="M68.6 1716.6 H91.4 M56 1728.2 H91.4 M68.6 1739.8 H91.4 M61.6 1722.2 L55.6 1728.2 L61.6 1734.2" stroke-width="2.2" stroke-linecap="butt"/></g><path d="M65.4 762.0 Q66.4 766.8 70.9 767.8 Q66.4 768.8 65.4 773.5999999999999 Q64.4 768.8 59.900000000000006 767.8 Q64.4 766.8 65.4 762.0 Z" fill="#ffffff"/><path d="M78.4 762.0 Q79.4 766.8 83.9 767.8 Q79.4 768.8 78.4 773.5999999999999 Q77.4 768.8 72.9 767.8 Q77.4 766.8 78.4 762.0 Z" fill="#ffffff"/></svg>
<span class="t" style="left:25.33px;top:291.54px;font-size:25px;font-weight:400;color:#ffffff;transform:scaleX(0.9851);-webkit-text-stroke:0.5px #fff">Explorer</span>
<span class="t" style="left:7.40px;top:418.84px;font-size:25px;font-weight:400;color:#ffffff;transform:scaleX(0.9479);-webkit-text-stroke:0.5px #fff">Dashboards</span>
<span class="t" style="left:29.05px;top:548.14px;font-size:25px;font-weight:400;color:#ffffff;transform:scaleX(0.9725);-webkit-text-stroke:0.5px #fff">Reports</span>
<span class="t" style="left:44.71px;top:675.54px;font-size:25px;font-weight:400;color:#ffffff;transform:scaleX(0.9946);-webkit-text-stroke:0.5px #fff">Data</span>
<span class="t" style="left:33.30px;top:803.84px;font-size:25px;font-weight:400;color:#ffffff;transform:scaleX(0.9186);-webkit-text-stroke:0.5px #fff">Ask Zia</span>
<span class="t" style="left:7.12px;top:931.14px;font-size:25px;font-weight:400;color:#ffffff;transform:scaleX(0.9411);-webkit-text-stroke:0.5px #fff">Code Studio</span>
<span class="t" style="left:29.30px;top:1059.84px;font-size:25px;font-weight:400;color:#ffffff;transform:scaleX(0.9956);-webkit-text-stroke:0.5px #fff">AutoML</span>
<span class="t" style="left:1.45px;top:1182.84px;font-size:25px;font-weight:400;color:#ffffff;transform:scaleX(0.9265);-webkit-text-stroke:0.5px #fff">Data Sources</span>
<span class="t" style="left:28.93px;top:1315.84px;font-size:25px;font-weight:400;color:#ffffff;transform:scaleX(0.9505);-webkit-text-stroke:0.5px #fff">Settings</span>
<span class="t" style="left:42.84px;top:1443.54px;font-size:25px;font-weight:400;color:#ffffff;transform:scaleX(0.9295);-webkit-text-stroke:0.5px #fff">Trash</span>
<span class="t" style="left:34.30px;top:1615.84px;font-size:25px;font-weight:400;color:#ffffff;transform:scaleX(0.9878);-webkit-text-stroke:0.5px #fff">Viewer</span>
<div class="r" style="left:32.3px;top:1558px;width:79.4px;height:40px;background:#eeeeee;border-radius:20px;"></div>
<div class="r" style="left:34.3px;top:1561.5px;width:32.6px;height:32.6px;background:#ffffff;border-radius:17px;box-shadow:0 1px 2px rgba(0,0,0,.12)"></div>
<div class="r" style="left:1264px;top:104px;width:1600px;height:1672px;border-radius:16px;background:radial-gradient(ellipse 900px 250px at 1040px 340px,rgba(245,246,253,1) 0%,rgba(245,246,253,0) 100%),linear-gradient(180deg,#fefefe 0px,#fcfcfe 100px,#fafbfe 190px,#fafafe 430px,#fcfcfe 620px,#fefefe 780px,#ffffff 950px);box-shadow:0 0 64px rgba(0,0,0,.19);"></div>
<svg class="r" style="left:1290px;top:130px;" width="40" height="50" viewBox="1290 130 40 50" fill="none" stroke-linecap="round" stroke-linejoin="round"><path d="M1317.6 140 L1302.3 154.2 L1317.6 168.4" stroke="#666" stroke-width="4"/></svg>
<span class="t" style="left:1346.01px;top:142.31px;font-size:32px;font-weight:700;color:#000;transform:scaleX(0.9196);">Apply Permissions &amp; Filters</span>
<div class="r" style="left:1264px;top:211px;width:1600px;height:4px;background:#e9e9e9;border-radius:0px;"></div>
<span class="t" style="left:1292.47px;top:249.60px;font-size:30px;font-weight:700;color:#0a0a0a;transform:scaleX(0.9170);">Permissions</span>
<span class="t" style="left:1534.74px;top:249.60px;font-size:30px;font-weight:700;color:#6c6c6c;transform:scaleX(0.9790);">Filter Criteria</span>
<div class="r" style="left:1294px;top:307px;width:1540px;height:2px;background:#dedede;border-radius:0px;"></div>
<div class="r" style="left:1294.3px;top:302.7px;width:161.7px;height:6.3px;background:#2e5fd8;border-radius:3.2px;"></div>
<span class="t" style="left:1293.08px;top:359.00px;font-size:28px;font-weight:400;color:#111;transform:scaleX(0.9770);-webkit-text-stroke:0.3px #111">Select the permissions to be granted for this view</span>
<div class="cb " style="left:1294px;top:421.3px"></div>
<span class="t" style="left:1349.05px;top:423.00px;font-size:28px;font-weight:700;color:#333;transform:scaleX(0.9428);">Read Options</span>
<div class="cb dis" style="left:1294px;top:482px"></div>
<svg class="r" style="left:1294px;top:482px;" width="30" height="30" viewBox="1294 482 30 30" fill="none" stroke-linecap="round" stroke-linejoin="round"><path d="M1300.9 497.1 L1306.3 502.6 L1317 490.9" stroke="#fff" stroke-width="4" stroke-linejoin="miter" stroke-linecap="butt"/></svg>
<span class="t" style="left:1348.59px;top:484.00px;font-size:28px;font-weight:400;color:#939393;transform:scaleX(0.9368);-webkit-text-stroke:0.3px #939393">Read Access</span>
<div class="cb " style="left:1532px;top:481.3px"></div>
<span class="t" style="left:1586.03px;top:484.00px;font-size:28px;font-weight:400;color:#333;transform:scaleX(1.0074);-webkit-text-stroke:0.3px #333">Export Data</span>
<div class="cb " style="left:1766px;top:482px"></div>
<span class="t" style="left:1821.58px;top:484.00px;font-size:28px;font-weight:400;color:#333;transform:scaleX(0.9988);-webkit-text-stroke:0.3px #333">View Underlying Data</span>
<div class="cb " style="left:2121px;top:482px"></div>
<span class="t" style="left:2174.30px;top:484.00px;font-size:28px;font-weight:400;color:#333;transform:scaleX(1.0661);-webkit-text-stroke:0.3px #333">Drill Down</span>
<div class="cb " style="left:2339px;top:481.3px"></div>
<span class="t" style="left:2392.95px;top:484.00px;font-size:28px;font-weight:400;color:#333;transform:scaleX(1.0444);-webkit-text-stroke:0.3px #333">Drill Through</span>
<div class="cb " style="left:2589px;top:481.3px"></div>
<span class="t" style="left:2642.82px;top:484.00px;font-size:28px;font-weight:400;color:#333;transform:scaleX(1.0594);-webkit-text-stroke:0.3px #333">Drill Actions</span>
<div class="cb on" style="left:1294px;top:532px"></div>
<svg class="r" style="left:1294px;top:532px;" width="30" height="30" viewBox="1294 532 30 30" fill="none" stroke-linecap="round" stroke-linejoin="round"><path d="M1300.9 547.1 L1306.3 552.6 L1317 540.9" stroke="#fff" stroke-width="4" stroke-linejoin="miter" stroke-linecap="butt"/></svg>
<span class="t" style="left:1349.85px;top:534.00px;font-size:28px;font-weight:400;color:#333;transform:scaleX(0.9742);-webkit-text-stroke:0.3px #333">Zia Insights</span>
<div class="cb " style="left:1294px;top:643px"></div>
<span class="t" style="left:1350.00px;top:645.30px;font-size:28px;font-weight:700;color:#333;transform:scaleX(0.9297);">Sharing and Collaboration Options</span>
<div class="cb " style="left:1294px;top:703px"></div>
<span class="t" style="left:1349.48px;top:704.60px;font-size:28px;font-weight:400;color:#333;transform:scaleX(0.9779);-webkit-text-stroke:0.3px #333">Share View / Child Reports</span>
<div class="cb on" style="left:1707px;top:703px"></div>
<svg class="r" style="left:1707px;top:703px;" width="30" height="30" viewBox="1707 703 30 30" fill="none" stroke-linecap="round" stroke-linejoin="round"><path d="M1713.9 718.1 L1719.3 723.6 L1730 711.9" stroke="#fff" stroke-width="4" stroke-linejoin="miter" stroke-linecap="butt"/></svg>
<span class="t" style="left:1764.00px;top:704.60px;font-size:28px;font-weight:400;color:#333;transform:scaleX(1.0067);-webkit-text-stroke:0.3px #333">Allow Commenting</span>
<div class="cb " style="left:2028px;top:703px"></div>
<span class="t" style="left:2084.30px;top:704.60px;font-size:28px;font-weight:400;color:#333;transform:scaleX(0.9835);-webkit-text-stroke:0.3px #333">Access Admin/Owner Presets</span>
<div class="cb " style="left:2476px;top:703px"></div>
<span class="t" style="left:2533.00px;top:704.60px;font-size:28px;font-weight:400;color:#333;transform:scaleX(1.0048);-webkit-text-stroke:0.3px #333">Allow Preset creation</span>
</body></html>
